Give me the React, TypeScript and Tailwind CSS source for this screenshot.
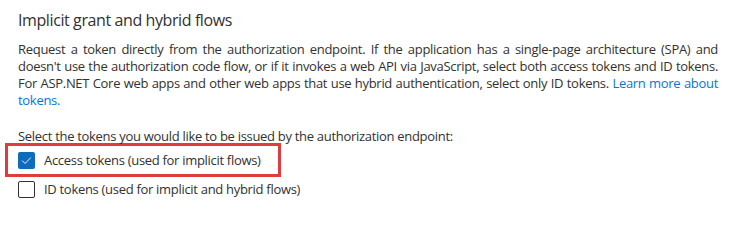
export default function App() {
  return (
    <div
      className="w-[738px] h-[219px] bg-white px-[18px] pt-[9px] text-[#323130] overflow-hidden"
      style={{ fontFamily: '"Open Sans", "Liberation Sans", sans-serif' }}
    >
      <h2 className="text-[16px] leading-[22px] tracking-[-0.4px]">Implicit grant and hybrid flows</h2>
      <p className="mt-[10px] w-[700px] text-[13px] leading-[17px] tracking-[-0.3px] text-justify">
        Request a token directly from the authorization endpoint. If the application has a single-page architecture
        (SPA) and doesn't use the authorization code flow, or if it invokes a web API via JavaScript, select both access
        tokens and ID tokens. For ASP.NET Core web apps and other web apps that use hybrid authentication, select only
        ID tokens.{' '}
        <a href="#" className="text-[#0078d4]">
          Learn more about tokens.
        </a>
      </p>
      <p className="mt-[19px] text-[13px] leading-[17px] tracking-[-0.3px]">
        Select the tokens you would like to be issued by the authorization endpoint:
      </p>
      <div className="-mt-[2px] -ml-[13px] w-[276px] border-[3.5px] border-[#e03c3c] py-[5px] pl-[10px] flex items-center gap-[9px]">
        <span className="w-[17px] h-[17px] rounded-[2px] bg-[#0f6cbd] flex items-center justify-center">
          <svg width="11" height="9" viewBox="0 0 11 9" fill="none">
            <path d="M1.2 4.6l2.9 2.9L9.8 1.6" stroke="white" strokeWidth="0.9" />
          </svg>
        </span>
        <span className="text-[13px] leading-[18px] tracking-[-0.3px]">Access tokens (used for implicit flows)</span>
      </div>
      <div className="mt-[3px] flex items-center gap-[9px]">
        <span className="w-[17px] h-[17px] rounded-[2px] border border-[#323130] bg-white" />
        <span className="text-[13px] leading-[18px] tracking-[-0.3px]">
          ID tokens (used for implicit and hybrid flows)
        </span>
      </div>
    </div>
  )
}
